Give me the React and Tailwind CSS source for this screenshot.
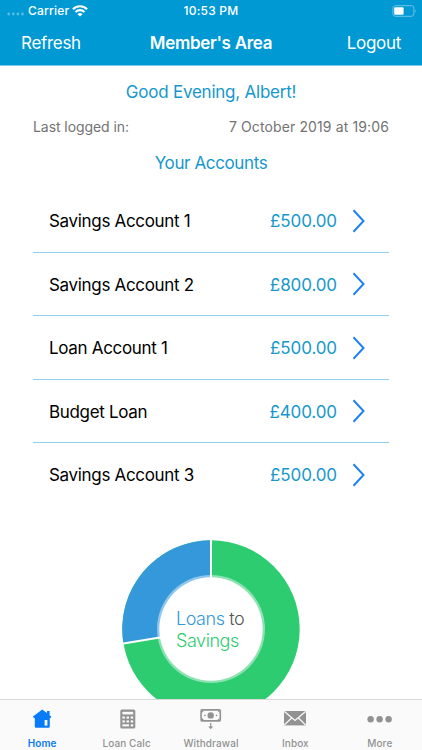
import React from 'react';

const accounts = [
    { name: 'Savings Account 1', balance: '£500.00' },
    { name: 'Savings Account 2', balance: '£800.00' },
    { name: 'Loan Account 1', balance: '£500.00' },
    { name: 'Budget Loan', balance: '£400.00' },
    { name: 'Savings Account 3', balance: '£500.00' },
];

const HomeIcon = () => (
    <svg width="20" height="20" viewBox="0 0 20 20" fill="currentColor">
        <path d="M10.2 0.4 L15 4 V2 H17.6 V6.2 L19.2 7.6 L18.6 9.2 L17.8 8.8 V17.6 Q17.8 18.8 16.6 18.8 H4 Q2.8 18.8 2.8 17.6 V8.8 L1.9 9.2 L1 7.6 Z" />
        <path d="M12.6 11 H15.4 V16.6 H12.6 Z" fill="#fafafa" />
    </svg>
);

const CalculatorIcon = () => (
    <svg width="16" height="20" viewBox="0 0 16 20" className="ml-0.5">
        <rect x="0.3" y="0.5" width="15" height="19" rx="1.6" fill="currentColor" />
        <g fill="#fafafa">
            <rect x="2.4" y="2.8" width="10.8" height="2.6" />
            <rect x="2.4" y="7.5" width="2.5" height="2.1" />
            <rect x="6.5" y="7.5" width="2.5" height="2.1" />
            <rect x="10.7" y="7.5" width="2.5" height="2.1" />
            <rect x="2.4" y="11.4" width="2.5" height="2.1" />
            <rect x="6.5" y="11.4" width="2.5" height="2.1" />
            <rect x="10.7" y="11.4" width="2.5" height="2.1" />
            <rect x="2.4" y="15.3" width="6.6" height="2.1" />
            <rect x="10.7" y="15.3" width="2.5" height="2.1" />
        </g>
    </svg>
);

const WithdrawalIcon = () => (
    <svg width="22" height="22" viewBox="0 0 22 22" fill="currentColor">
        <rect x="1.1" y="1.9" width="19.2" height="11" rx="0.8" fill="none" stroke="currentColor" strokeWidth="1.6" />
        <circle cx="10.7" cy="7.4" r="3.2" />
        <circle cx="4.9" cy="7.4" r="0.8" />
        <circle cx="16.5" cy="7.4" r="0.8" />
        <path d="M2 2.8 h2 L2 4.8 Z M19.4 2.8 h-2 L19.4 4.8 Z M2 12 h2 L2 10 Z M19.4 12 h-2 L19.4 10 Z" />
        <path d="M10.1 15 H11.3 V18.4 H13.2 L10.7 21.2 L8.2 18.4 H10.1 Z" />
    </svg>
);

const InboxIcon = () => (
    <svg width="22" height="15" viewBox="0 0 22 15">
        <rect width="22" height="14.4" fill="currentColor" />
        <path d="M0.3 0.4 L11 9.4 L21.7 0.4 M0.3 14 L7.8 6.8 M21.7 14 L14.2 6.8" fill="none" stroke="#fafafa" strokeWidth="1.3" />
    </svg>
);

const MoreIcon = () => (
    <svg width="26" height="8" viewBox="0 0 26 8" fill="currentColor">
        <circle cx="3.6" cy="4.2" r="3.2" />
        <circle cx="12.6" cy="4.2" r="3.2" />
        <circle cx="21.6" cy="4.2" r="3.2" />
    </svg>
);

const tabs = [
    { label: 'Home', icon: HomeIcon, active: true },
    { label: 'Loan Calc', icon: CalculatorIcon },
    { label: 'Withdrawal', icon: WithdrawalIcon },
    { label: 'Inbox', icon: InboxIcon },
    { label: 'More', icon: MoreIcon },
];

const StatusBar = () => (
    <div className="grid grid-cols-3 h-5 items-center pl-[7px] pr-[5px] pt-px text-[12px] font-medium tracking-[0.2px]">
        <div className="flex items-center">
            <svg width="18" height="4" viewBox="0 0 18 4" className="mt-[7px] mr-[3px]" fill="#55bce3">
                <circle cx="1.7" cy="2" r="1.4" />
                <circle cx="6.3" cy="2" r="1.4" />
                <circle cx="10.9" cy="2" r="1.4" />
                <circle cx="15.5" cy="2" r="1.4" />
            </svg>
            <span>Carrier</span>
            <svg width="16" height="12" viewBox="0 0 16 12" className="ml-[3px]" fill="none" stroke="white" strokeWidth="2.1">
                <path d="M0.9 4.2 A10.2 10.2 0 0 1 15.1 4.2" />
                <path d="M3.5 7 A6.4 6.4 0 0 1 12.5 7" />
                <path d="M8 11.6 L5.5 9.2 A3.6 3.6 0 0 1 10.5 9.2 Z" fill="white" stroke="none" />
            </svg>
        </div>
        <span className="text-center -ml-0.5">10:53 PM</span>
        <svg width="26" height="12" viewBox="0 0 26 12" className="justify-self-end">
            <rect x="1.9" y="0.7" width="21" height="10.6" rx="2.6" fill="none" stroke="#6cc5e8" />
            <rect x="3.2" y="2.2" width="9.4" height="7.6" rx="1" fill="white" />
            <path d="M24 4.2 Q25.6 6 24 7.8 Z" fill="#6cc5e8" />
        </svg>
    </div>
);

const AccountRow = ({ account }) => (
    <li className="flex items-center h-[63.5px] pl-4 pr-6 pt-px border-b border-[#8fd3ea] last:border-b-0 last:pt-0">
        <span className="flex-1 pt-0.5 text-[17px] tracking-[-0.32px] text-black">{account.name}</span>
        <span className="pt-0.5 text-[17px] tracking-[-0.1px] text-[#1698cc]">{account.balance}</span>
        <svg width="13" height="24" viewBox="0 0 13 24" className="ml-[15px]" fill="none" stroke="#2080f5" strokeWidth="2">
            <path d="M1.5 1.2 L11.5 12 L1.5 22.8" />
        </svg>
    </li>
);

const LoansChart = () => (
    <div className="grid place-items-center w-[180px] h-[180px] mx-auto mt-8 shrink-0">
        <svg width="180" height="180" viewBox="-90 -90 180 180" className="col-start-1 row-start-1">
            <circle r="88.7" fill="#2ecc71" />
            <path d="M0 0 L-87.5 14.6 A88.7 88.7 0 0 1 0 -88.7 Z" fill="#3498db" />
            <path d="M0 0 V-90 M0 0 L-89 14.8" stroke="white" strokeWidth="2" />
            <circle r="54" fill="white" fillOpacity="0.45" />
            <circle r="51.7" fill="white" />
        </svg>
        <div className="col-start-1 row-start-1 w-[70px] pt-0.5 text-[18px] leading-[22px] font-light tracking-[-0.45px] whitespace-nowrap">
            <div className="text-[#555555]"><span className="text-[#3498db]">Loans</span> to</div>
            <div className="text-[#2ecc71]">Savings</div>
        </div>
    </div>
);

const App = () => {
    return (
        <div className="flex flex-col w-full h-[750px] overflow-hidden bg-white font-['Inter','Liberation_Sans',sans-serif]">
            {/* Header */}
            <header className="h-[66px] shrink-0 bg-[#0099d4] text-white border-b border-[#7fccea]">
                <StatusBar />
                <nav className="grid grid-cols-[1fr_auto_1fr] items-center h-[45px] pt-[3px] px-[21px] text-[17px] tracking-[-0.3px]">
                    <button className="text-left">Refresh</button>
                    <h1 className="font-semibold">Member's Area</h1>
                    <button className="text-right">Logout</button>
                </nav>
            </header>

            {/* Page content */}
            <main className="flex-1 min-h-0 flex flex-col overflow-hidden px-[33px]">
                <h2 className="mt-[14px] h-6 leading-6 text-center text-[17px] tracking-[-0.23px] text-[#1698cc]">Good Evening, Albert!</h2>
                <div className="flex justify-between mt-[13px] h-5 leading-5 text-[14px] text-[#737373]">
                    <span className="tracking-[-0.07px]">Last logged in:</span>
                    <span className="tracking-[0.12px]">7 October 2019 at 19:06</span>
                </div>
                <h2 className="mt-[14px] h-6 leading-6 text-center text-[17px] tracking-[-0.38px] text-[#1698cc]">Your Accounts</h2>
                <ul className="mt-[14px]">
                    {accounts.map((account) => (
                        <AccountRow key={account.name} account={account} />
                    ))}
                </ul>
                <LoansChart />
            </main>

            {/* Tab bar */}
            <footer className="grid grid-cols-5 h-[51px] shrink-0 bg-[#fafafa] border-t border-[#d9d9d9]">
                {tabs.map(({ label, icon: Icon, active }) => (
                    <button key={label} className={`flex flex-col items-center ${active ? 'text-[#087cf8] font-semibold' : 'text-[#929292] font-medium'}`}>
                        <span className="flex items-center justify-center h-[37px]">
                            <Icon />
                        </span>
                        <span className="text-[10px] leading-3 tracking-[0.1px]">{label}</span>
                    </button>
                ))}
            </footer>
        </div>
    );
};

export default App;
